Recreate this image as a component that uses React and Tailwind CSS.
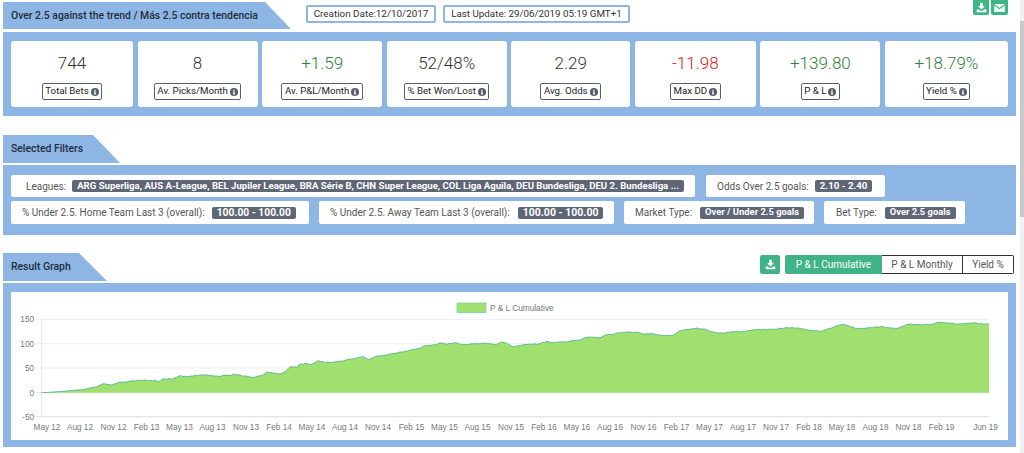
const FONT = "font-['Roboto','Liberation_Sans',sans-serif]";

function Info() {
  return (
    <svg viewBox="0 0 16 16" className="w-[8px] h-[8px] ml-[2px] shrink-0">
      <circle cx="8" cy="8" r="8" fill="#565b66" />
      <rect x="6.8" y="7" width="2.6" height="5.5" fill="#fff" />
      <rect x="5.6" y="11.2" width="5" height="1.5" fill="#fff" />
      <rect x="5.6" y="7" width="3" height="1.4" fill="#fff" />
      <rect x="6.8" y="3.4" width="2.6" height="2.4" fill="#fff" />
    </svg>
  );
}

function Download({ size = 10 }) {
  return (
    <svg viewBox="0 0 16 16" style={{ width: size, height: size }} fill="#fff">
      <path d="M6 1h4v5h3l-5 5-5-5h3z" />
      <path d="M1 11h3.5l1.5 1.6h4L11.5 11H15v4H1z" />
    </svg>
  );
}

function Tab({ children, w, slant, h }) {
  return (
    <div className={`relative ${w} ${h}`}>
      <svg className="absolute inset-0 w-full h-full" preserveAspectRatio="none" viewBox="0 0 100 100">
        <polygon points={`0,0 ${slant},0 100,100 0,100`} fill="#8db6e4" />
      </svg>
      <div className="relative pl-[8px] h-full flex items-center text-[10.4px] font-medium text-[#1f2d3d] whitespace-nowrap">
        {children}
      </div>
    </div>
  );
}

const stats = [
  ["744", "Total Bets", "text-[#333333]", "w-[122px]"],
  ["8", "Av. Picks/Month", "text-[#333333]", "w-[120px]"],
  ["+1.59", "Av. P&L/Month", "text-[#2f7f36]", "w-[120px]"],
  ["52/48%", "% Bet Won/Lost", "text-[#333333]", "w-[120px]"],
  ["2.29", "Avg. Odds", "text-[#333333]", "w-[119px]"],
  ["-11.98", "Max DD", "text-[#dc1522]", "w-[121px]"],
  ["+139.80", "P & L", "text-[#2f7f36]", "w-[120px]"],
  ["+18.79%", "Yield %", "text-[#2f7f36]", "w-[123px]"],
];

function Stat({ value, label, color, w }) {
  return (
    <div className={`${w} h-[66px] bg-white rounded-[3px] flex flex-col items-center pt-[12px]`}>
      <div className={`text-[17px] leading-[20px] font-light ${color}`}>{value}</div>
      <div className="mt-[10px] h-[17px] px-[2.5px] flex items-center border-[1.5px] border-[#5b6070] rounded-[2px] text-[9.7px] text-[#222] whitespace-nowrap">
        {label}
        <Info />
      </div>
    </div>
  );
}

function Chip({ label, value, className, pad, size = "text-[9.4px]", h = "h-[22px]", gap = "ml-[6px]" }) {
  return (
    <div className={`${h} bg-white rounded-[2px] flex items-center ${pad} ${className} whitespace-nowrap text-[10px] text-[#555]`}>
      <span>{label}</span>
      <span className={`${gap} bg-[#5f6675] text-white font-bold rounded-[2px] px-[5px] h-[12px] flex items-center ${size}`}>{value}</span>
    </div>
  );
}

const raw = [
  [41.3,392.7],[54,392],[66.7,391],[75,390.2],[83.3,389.7],[90,388],[96.7,386.7],[103.3,383.7],[108,384.4],[111.7,385],[117,383],[121.7,382],[126,382.2],[131,381],[140,380.3],[150,380.4],[160,381.3],[163.3,378.7],[167,379.4],[169,378.5],[171.7,379.3],[176,377.5],[180,375.7],[186,376.3],[193.3,376],[200,375],[206.7,374.7],[213,375.8],[220,376.7],[225,375],[231,375.6],[233,374],[241,375.5],[250,377],[254,377.5],[258,376],[262,375.8],[266.7,372.3],[272,373],[280,374],[285,372],[290,366.7],[296.7,367.3],[300,364.3],[305,363.6],[311.7,364.3],[318.3,360.7],[325,362.7],[335,362],[340,361.3],[350,359.3],[357,358],[363.3,356.7],[368.3,359.7],[376.7,356],[383,355.3],[390,354.3],[405,351.2],[420,348.3],[425,345.7],[430,345.4],[436.7,344.7],[440,342.7],[446.7,344.3],[455,342.7],[463.3,344.7],[473,344],[483.3,343.3],[490,343.6],[496.7,344.7],[501,342],[507,343.4],[513.3,347],[518,346],[525,344.3],[532,344.4],[540,343.7],[546.7,341.3],[553,342.7],[560,342],[566.7,342],[573,340.6],[580,340],[586.7,337.3],[593,337.3],[600,337.7],[606.7,334.7],[613,334.7],[618,332.7],[625,332.6],[630,332],[640,332.7],[643,334.3],[651.7,333.7],[663,335.7],[673.3,335.3],[680,330.7],[684,330],[690,329.5],[697,328],[702,329],[707,330],[715.7,332.7],[724,333.3],[732,331.7],[744,331.7],[754,329.7],[774,329.3],[785.7,327.7],[797,328],[804,329.2],[810.7,330.3],[820.7,331.3],[826,329.6],[830.7,328.3],[837.3,325.3],[844,324.7],[850,326.6],[855.7,328.7],[866,328.2],[880.7,326.7],[888,327.6],[895.7,328.7],[902,326.4],[909,324.3],[920,324.6],[930.7,324.7],[939,322.3],[945,322.9],[951,323.4],[957.3,324.3],[966,323.6],[974,322.7],[984,324.3],[989,324],
];
// Fill the gaps between the read-off points with small fixed wiggles, as the real series has.
const pts = [];
raw.forEach(([x, y], i) => {
  pts.push([x, y]);
  const next = raw[i + 1];
  if (!next) return;
  const steps = Math.floor((next[0] - x) / 2.2);
  for (let s = 1; s < steps; s++) {
    const t = s / steps;
    const amp = x < 120 ? 0.1 : 0.4;
    pts.push([x + (next[0] - x) * t, y + (next[1] - y) * t + Math.sin(x * 3.1 + s * 2.3) * amp]);
  }
});
const line = pts.map(([x, y]) => `${x.toFixed(1)},${y.toFixed(1)}`).join(" ");
const area = `41.3,392.7 ${line} 989,392.7`;

const xLabels = [
  ["May 12",47],["Aug 12",80],["Nov 12",113.5],["Feb 13",146.5],["May 13",179.5],["Aug 13",212.5],["Nov 13",246],["Feb 14",279],["May 14",312],["Aug 14",345],["Nov 14",378],["Feb 15",411.5],["May 15",444.5],["Aug 15",477.5],["Nov 15",511],["Feb 16",544],["May 16",577],["Aug 16",610],["Nov 16",643.5],["Feb 17",676.5],["May 17",709.5],["Aug 17",743],["Nov 17",776],["Feb 18",809],["May 18",842],["Aug 18",875.5],["Nov 18",908.5],["Feb 19",941.5],["Jun 19",985.5],
];
const yLabels = [["150",319.3],["100",343.7],["50",368],["0",392.7],["-50",416.7]];

function ResultChart() {
  return (
    <svg width="997" height="148" viewBox="11 292 997 148" className="block" fontFamily="'Liberation Sans',Arial,sans-serif">
      <rect x="457" y="303" width="29" height="9.5" fill="#9fe070" stroke="#7fcf9a" strokeWidth="0.8" />
      <text x="490" y="310.5" fontSize="8.3" fill="#777">P &amp; L Cumulative</text>
      {yLabels.map(([t, y]) => (
        <g key={t}>
          <line x1="36.5" x2="989" y1={y} y2={y} stroke={t === "0" || t === "-50" ? "#dedede" : "#eeeeee"} strokeWidth="1" />
          <text x="34" y={y + 2.8} fontSize="8.2" fill="#777" textAnchor="end">{t}</text>
        </g>
      ))}
      <line x1="41.3" x2="41.3" y1="319" y2="418" stroke="#e6e6e6" />
      {xLabels.map(([t, x]) => (
        <text key={t} x={x} y="430" fontSize="8.2" fill="#777" textAnchor="middle">{t}</text>
      ))}
      <polygon points={area} fill="#a0e06f" />
      <polyline points={line} fill="none" stroke="#53b58d" strokeWidth="0.9" />
    </svg>
  );
}

export default function App() {
  return (
    <div className={`w-[1024px] h-[453px] overflow-hidden bg-white flex ${FONT}`}>
      <main className="w-[1020px] pl-[3px] pt-[2px]">
        <div className="flex items-start">
          <Tab w="w-[288px]" h="h-[27px]" slant="91">Over 2.5 against the trend / Más 2.5 contra tendencia</Tab>
          <div className="ml-[15px] mt-[3px] h-[18px] w-[130px] border-2 border-[#8db6e4] rounded-[2px] flex items-center justify-center text-[9.9px] text-[#333] whitespace-nowrap">Creation Date:12/10/2017</div>
          <div className="ml-[7px] mt-[3px] h-[18px] w-[187px] border-2 border-[#8db6e4] rounded-[2px] flex items-center justify-center text-[9.8px] text-[#333] whitespace-nowrap">Last Update: 29/06/2019 05:19 GMT+1</div>
          <div className="ml-auto mr-[12px] -mt-[2px] flex gap-[2px]">
            <div className="w-[16px] h-[15px] bg-[#3fb686] rounded-b-[2px] flex items-center justify-center"><Download size={11} /></div>
            <div className="w-[17px] h-[15px] bg-[#3fb686] rounded-b-[2px] flex items-center justify-center">
              <svg viewBox="0 0 16 12" className="w-[11px] h-[8px]" fill="#e8f7f0"><path d="M0 0h16L8 6z" /><path d="M0 2l8 6 8-6v10H0z" /></svg>
            </div>
          </div>
        </div>
        <section className="mt-[3px] w-[1013px] h-[84px] bg-[#8db6e4] px-[8px] pt-[9px] flex gap-[4.57px]">
          {stats.map(([v, l, c, w]) => <Stat key={l} value={v} label={l} color={c} w={w} />)}
        </section>

        <div className="mt-[19px]">
          <Tab w="w-[117px]" h="h-[28px]" slant="77">Selected Filters</Tab>
        </div>
        <section className="mt-[2px] w-[1013px] h-[70px] bg-[#8db6e4] px-[8px] pt-[10px] flex flex-col gap-[4px]">
          <div className="flex gap-[11px]">
            <Chip className="w-[684px]" label="Leagues:" value="ARG Superliga, AUS A-League, BEL Jupiler League, BRA Série B, CHN Super League, COL Liga Aguila, DEU Bundesliga, DEU 2. Bundesliga ..." pad="pl-[15px] pr-[10px]" size="text-[9.6px]" />
            <Chip className="w-[179px]" label="Odds Over 2.5 goals:" value="2.10 - 2.40" pad="pl-[11px] pr-[10px]" size="text-[9.7px]" />
          </div>
          <div className="flex gap-[10px]">
            <Chip h="h-[23px]" gap="ml-[7px]" className="w-[298px]" label="% Under 2.5. Home Team Last 3 (overall):" value="100.00 - 100.00" pad="pl-[11px] pr-[10px]" size="text-[10.3px]" />
            <Chip h="h-[23px]" gap="ml-[8px]" className="w-[295px]" label="% Under 2.5. Away Team Last 3 (overall):" value="100.00 - 100.00" pad="pl-[11px] pr-[10px]" size="text-[10.5px]" />
            <Chip h="h-[23px]" gap="ml-[8px]" className="w-[190px]" label="Market Type:" value="Over / Under 2.5 goals" pad="pl-[11px] pr-[10px]" />
            <Chip h="h-[23px]" gap="ml-[8px]" className="w-[141px]" label="Bet Type:" value="Over 2.5 goals" pad="pl-[12px] pr-[10px]" />
          </div>
        </section>

        <div className="mt-[18px] flex items-start">
          <Tab w="w-[104px]" h="h-[28px]" slant="73">Result Graph</Tab>
          <div className="ml-auto mr-[6px] mt-[2px] flex">
            <div className="w-[20px] h-[19px] bg-[#41b487] rounded-[2px] flex items-center justify-center mr-[5px]"><Download size={11} /></div>
            <div className="flex text-[10px]">
              <div className="w-[97px] h-[19px] bg-[#41b487] text-white rounded-l-[2px] flex items-center justify-center">P &amp; L Cumulative</div>
              <div className="w-[81px] h-[19px] border-y border-r border-[#333] text-[#555] flex items-center justify-center">P &amp; L Monthly</div>
              <div className="w-[51px] h-[19px] border-y border-r border-[#333] rounded-r-[2px] text-[#555] flex items-center justify-center">Yield %</div>
            </div>
          </div>
        </div>
        <section className="mt-[2px] w-[1013px] h-[164px] bg-[#8db6e4] px-[8px] pt-[9px]">
          <div className="bg-white h-[148px]"><ResultChart /></div>
        </section>
      </main>
      <aside className="w-[4px] bg-[#f1f1f1] pt-[21px]">
        <div className="h-[196px] bg-[#c8c8c8]"></div>
      </aside>
    </div>
  );
}
